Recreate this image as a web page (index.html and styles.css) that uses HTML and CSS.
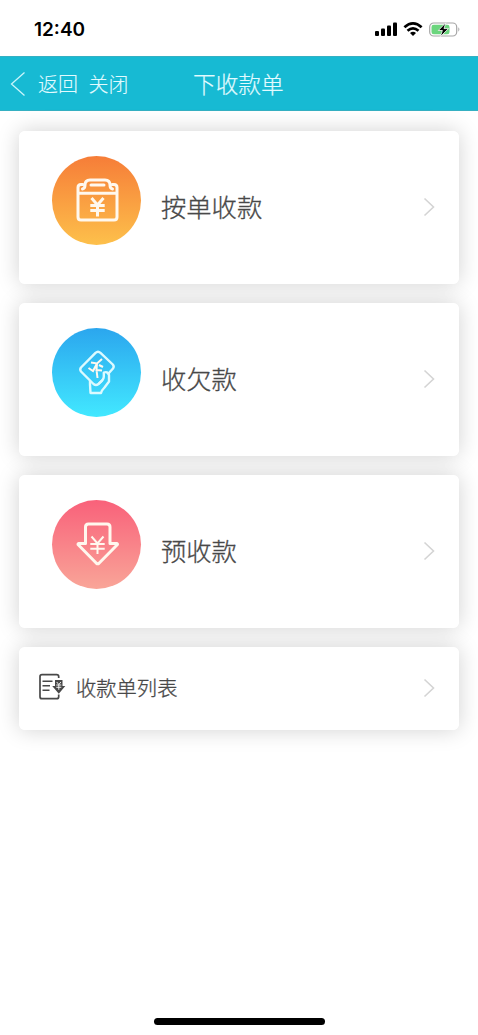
FILE: index.html
```html
<!DOCTYPE html>
<html lang="zh-CN">
<head>
<meta charset="utf-8">
<title>下收款单</title>
<link rel="stylesheet" href="styles.css">
</head>
<body>
<div class="status">
  <span class="time">12:40</span>
  <svg class="indicators" width="88" height="20" viewBox="0 0 88 20">
    <rect x="0" y="12" width="4" height="5" rx="1"/>
    <rect x="6" y="9.500" width="4" height="7.500" rx="1"/>
    <rect x="12" y="6.500" width="4" height="10.500" rx="1"/>
    <rect x="18" y="3.500" width="4" height="13.500" rx="1"/>
    <g class="wifi">
      <path d="M29.400 8.300Q38 .5 46.600 8.300"/>
      <path d="M32.500 11.800Q38 6.900 43.500 11.800"/>
    </g>
    <path d="M35 14Q38 11.500 41 14L38 17Z"/>
    <rect class="case" x="54.700" y="4" width="27" height="13" rx="4"/>
    <rect class="charge" x="56.500" y="5.800" width="18" height="9.400" rx="2.300"/>
    <path class="cap" d="M83.300 8.300Q85.500 10.500 83.300 12.700Z"/>
    <path class="bolt" d="M70.800 3.800L63.300 11.500H67.400L65.300 17.700L73.500 9.600H69Z"/>
  </svg>
</div>
<header class="bar">
  <svg class="back" width="16" height="26" viewBox="0 0 16 26"><path d="M14.500 1.500L1.500 13L14.500 24.500"/></svg>
  <span class="nav">返回</span>
  <span class="nav">关闭</span>
  <h1 class="title">下收款单</h1>
</header>
<main class="list">
  <a class="card">
    <span class="disc orange">
      <svg width="48" height="48" viewBox="0 0 48 48">
        <g class="line">
          <path d="M10 8.500H8Q5 8.500 5 11.500V41Q5 44 8 44H41Q44 44 44 41V11.500Q44 8.500 41 8.500H39M5 17.300H44"/>
          <path d="M9.500 13Q12 12.500 12 9Q12 4 17 4H32Q37 4 37 9Q37 12.500 39.500 13M18 9H31"/>
        </g>
        <path class="yen bold" d="M18.500 22L24.500 29L30.500 22M17.300 29.500H31.700M17.300 34.500H31.700M24.500 29V40.500"/>
      </svg>
    </span>
    <span class="label">按单收款</span>
    <svg class="arrow" width="12" height="20" viewBox="0 0 12 20"><path d="M1.500 1.500L10.500 10L1.500 18.500"/></svg>
  </a>
  <a class="card">
    <span class="disc blue">
      <svg width="48" height="48" viewBox="0 0 48 48">
        <g class="line thin">
          <path d="M29 32.500L25.500 36Q23 38 20.500 36L8 23.500Q6.500 21.500 8 19.500L22.500 4.800Q25 2.500 27.500 4.800L39.800 16.500Q41.500 18.500 40 20.500L35.500 25.500"/>
          <path d="M17 33V36.500L17.500 45H28Q28.500 42.500 31.500 39.500L36 33.500V27Q34.500 23 30.800 24.500V28.500Q31 31.500 26 35.500"/>
        </g>
        <path class="yen" d="M18 14.500L24 15.500L29 11M24 15.500L23.500 22L29 22.500M23.500 22L24.500 30M24 15.500L20 23L15.500 20M26 17L30 19"/>
      </svg>
    </span>
    <span class="label">收欠款</span>
    <svg class="arrow" width="12" height="20" viewBox="0 0 12 20"><path d="M1.500 1.500L10.500 10L1.500 18.500"/></svg>
  </a>
  <a class="card">
    <span class="disc pink">
      <svg width="48" height="48" viewBox="0 0 48 48">
        <path class="line" d="M12.500 23.500V7Q12.500 4 15.500 4H34Q37 4 37 7V23.500H44Q45 24 44 25L26 43.300Q24.700 44.300 23.400 43.300L5.500 25Q4.500 24 5.500 23.500Z"/>
        <path class="yen" d="M18.500 16.500L24.500 23.500L30.500 16.500M17.300 24H31.700M17.300 28.800H31.700M24.500 23.500V34"/>
      </svg>
    </span>
    <span class="label">预收款</span>
    <svg class="arrow" width="12" height="20" viewBox="0 0 12 20"><path d="M1.500 1.500L10.500 10L1.500 18.500"/></svg>
  </a>
  <a class="card small">
    <svg class="doc" width="28" height="28" viewBox="0 0 28 28">
      <path d="M20.700 5V3.700Q20.700 1.700 18.700 1.700H4Q2 1.700 2 3.700V23.700Q2 25.700 4 25.700H18.700Q20.700 25.700 20.700 23.700V21.500"/>
      <path class="rule" d="M4.500 8.300H14.500M4.500 12.800H12M4.500 17.300H11.500"/>
      <path class="fill" d="M17 7H24.500V13H27.300L20.800 20.700L14.200 13H17Z"/>
      <path class="mini" d="M18.700 9L20.800 11.500L22.900 9M18.300 12H23.300M18.300 14.300H23.300M20.800 11.500V16.800"/>
    </svg>
    <span class="label">收款单列表</span>
    <svg class="arrow" width="12" height="20" viewBox="0 0 12 20"><path d="M1.500 1.500L10.500 10L1.500 18.500"/></svg>
  </a>
</main>
<footer class="home"><span class="pill"></span></footer>
</body>
</html>
```
FILE: styles.css
```css
* { box-sizing: border-box; }
body {
  margin: 0;
  height: 1035px;
  display: flex;
  flex-direction: column;
  background: #fff;
  color: #484848;
  font-family: "Liberation Sans", "Noto Sans CJK SC", sans-serif;
  font-weight: 300;
  -webkit-text-stroke: .3px currentColor;
  overflow: hidden;
}
svg { display: block; flex: none; fill: none; }

.status {
  height: 56px;
  padding: 19px 16px 0 34px;
  display: flex;
  justify-content: space-between;
  align-items: flex-start;
}
.time {
  font: 600 19px/21px Inter, sans-serif;
  color: #000;
  -webkit-text-stroke: 0;
}
.indicators { fill: #000; margin-right: -1px; }
.wifi { fill: none; stroke: #000; stroke-width: 2.7; }
.case { fill: #fff; stroke: #a6a6a6; stroke-width: 1.2; }
.charge { fill: #6bd57d; }
.cap { fill: #a6a6a6; }
.bolt { fill: #000; stroke: #fff; stroke-width: .8; }

.bar {
  height: 55px;
  padding-left: 10px;
  display: flex;
  align-items: center;
  background: #17bad3;
  border-top: 1px solid #35b0c2;
  border-bottom: 1px solid #35b0c2;
  color: #e2fbff;
}
.back { stroke: #c9f5fb; stroke-width: 1.3; margin-right: 12px; }
.nav { font-size: 20px; margin-right: 10.5px; -webkit-text-stroke-width: .1px; }
.title {
  margin: 0 0 0 54px;
  font-size: 22.7px;
  font-weight: 300;
  -webkit-text-stroke-width: .2px;
}

.list {
  flex: 1;
  padding: 20px 19px 0;
  display: flex;
  flex-direction: column;
  gap: 19px;
  isolation: isolate;
}
.card {
  position: relative;
  height: 153px;
  padding: 0 24px 0 33px;
  display: flex;
  align-items: center;
  background: #fff;
  border-radius: 6px;
}
/* Shadows sit below every card so they only tint the gaps */
.card::before {
  content: "";
  position: absolute;
  inset: 0;
  z-index: -1;
  border-radius: 6px;
  box-shadow: 0 0 22px rgba(0, 0, 0, .18);
}
.disc {
  width: 89px;
  height: 89px;
  margin: 0 20px 15px 0;
  border-radius: 50%;
  display: grid;
  place-items: center;
}
.orange { background: linear-gradient(#f67d38, #fdc04b); }
.blue { background: linear-gradient(#2ba6ee, #42e8ff); }
.pink { background: linear-gradient(#f9617a, #f9a598); }
.label { flex: 1; font-size: 25.3px; line-height: 36px; }
.arrow { stroke: #d4d4d4; stroke-width: 1.6; margin-bottom: 1px; }
.line { stroke: #fff8ee; stroke-width: 3; stroke-linejoin: round; stroke-linecap: round; }
.thin { stroke: #dcfaff; stroke-width: 2.4; }
.yen { stroke: #fff8ee; stroke-width: 2; }
.bold { stroke-width: 3; }

.small { height: 83px; padding-left: 19px; }
.small .label { font-size: 20.3px; margin-left: -1px; }
.doc { margin: 0 11px 4px 0; stroke: #484848; stroke-width: 1.7; }
.doc .rule { stroke-width: 1.4; }
.doc .fill { fill: #484848; stroke: none; }
.doc .mini { stroke: #fff; stroke-width: .9; }

.home { display: flex; justify-content: center; padding-bottom: 10px; }
.pill { width: 171px; height: 7px; border-radius: 4px; background: #000; }
```
